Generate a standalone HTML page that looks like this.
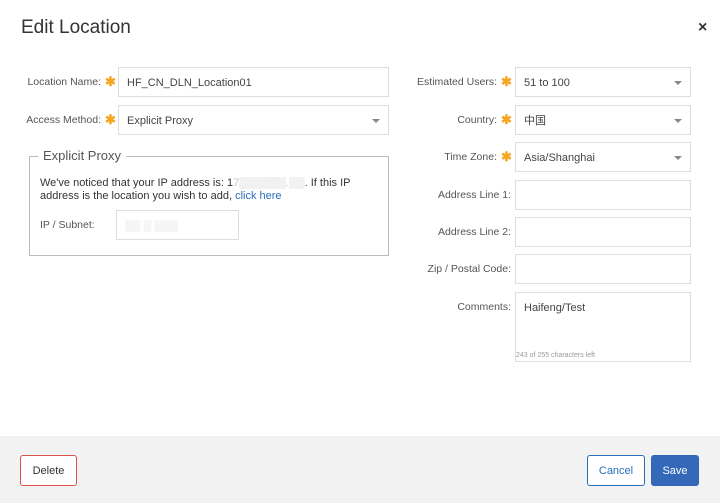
<!DOCTYPE html>
<html><head><style>
*{box-sizing:border-box;margin:0;padding:0}
body{width:720px;height:503px;background:#fff;font-family:"Liberation Sans","Noto Sans CJK SC",sans-serif;color:#444;position:relative;overflow:hidden;font-size:11px}
.a{position:absolute}
.in{position:absolute;border:1px solid #ddd;background:#fff;height:30px;line-height:30px;padding-left:8px;font-size:11px;color:#444}
.lb{position:absolute;text-align:right;font-size:10.5px;color:#555;line-height:30px}
.st{position:absolute;color:#f5a623;font-size:13px;line-height:30px;font-weight:bold}
.car{position:absolute;right:8px;top:13px;width:0;height:0;border-left:4px solid transparent;border-right:4px solid transparent;border-top:4px solid #888}
.btn{position:absolute;border-radius:3px;font-size:11px;text-align:center;line-height:30px;height:31px}
</style></head><body>
<div class="a" style="left:21px;top:17px;font-size:19px;color:#333">Edit Location</div>
<div class="a" style="left:698px;top:19px;font-size:16px;font-weight:bold;color:#333">×</div>

<div class="lb" style="left:0;width:101px;top:67px">Location Name:</div><div class="st" style="left:105px;top:67px">✱</div>
<div class="in" style="left:118px;top:67px;width:271px">HF_CN_DLN_Location01</div>
<div class="lb" style="left:0;width:101px;top:105px">Access Method:</div><div class="st" style="left:105px;top:105px">✱</div>
<div class="in" style="left:118px;top:105px;width:271px">Explicit Proxy<div class="car"></div></div>

<div class="a" style="left:29px;top:156px;width:360px;height:100px;border:1px solid #bbb"></div>
<div class="a" style="left:38px;top:148px;background:#fff;padding:0 5px;font-size:13px;color:#555">Explicit Proxy</div>
<div class="a" style="left:40px;top:177px;font-size:11px;color:#333;line-height:13px">We've noticed that your IP address is: 1<span style="color:#ccc">7▒▒▒▒▒▒.▒▒</span>. If this IP<br>address is the location you wish to add, <span style="color:#2a6ebb">click here</span></div>
<div class="a" style="left:40px;top:219px;color:#555;font-size:10.5px">IP / Subnet:</div>
<div class="in" style="left:116px;top:210px;width:123px;color:#ddd">▒▒ ▒ ▒▒▒</div>

<div class="lb" style="left:380px;width:117px;top:67px">Estimated Users:</div><div class="st" style="left:501px;top:67px">✱</div>
<div class="in" style="left:515px;top:67px;width:176px">51 to 100<div class="car"></div></div>
<div class="lb" style="left:380px;width:117px;top:105px">Country:</div><div class="st" style="left:501px;top:105px">✱</div>
<div class="in" style="left:515px;top:105px;width:176px">中国<div class="car"></div></div>
<div class="lb" style="left:380px;width:117px;top:142px">Time Zone:</div><div class="st" style="left:501px;top:142px">✱</div>
<div class="in" style="left:515px;top:142px;width:176px">Asia/Shanghai<div class="car"></div></div>
<div class="lb" style="left:380px;width:131px;top:180px">Address Line 1:</div>
<div class="in" style="left:515px;top:180px;width:176px"></div>
<div class="lb" style="left:380px;width:131px;top:217px">Address Line 2:</div>
<div class="in" style="left:515px;top:217px;width:176px"></div>
<div class="lb" style="left:380px;width:131px;top:254px">Zip / Postal Code:</div>
<div class="in" style="left:515px;top:254px;width:176px"></div>
<div class="lb" style="left:380px;width:131px;top:292px">Comments:</div>
<div class="in" style="left:515px;top:292px;width:176px;height:70px">Haifeng/Test
<div class="a" style="left:0;top:58px;font-size:7px;line-height:9px;color:#999">243 of 255 characters left</div></div>

<div class="a" style="left:0;top:436px;width:720px;height:67px;background:#f2f2f2"></div>
<div class="btn" style="left:20px;top:455px;width:57px;border:1px solid #d9534f;background:#fff;color:#333">Delete</div>
<div class="btn" style="left:587px;top:455px;width:58px;border:1px solid #2a6ebb;background:#fff;color:#2a6ebb">Cancel</div>
<div class="btn" style="left:651px;top:455px;width:48px;border:1px solid #2f67b4;background:#3468b8;color:#fff">Save</div>
</body></html>
